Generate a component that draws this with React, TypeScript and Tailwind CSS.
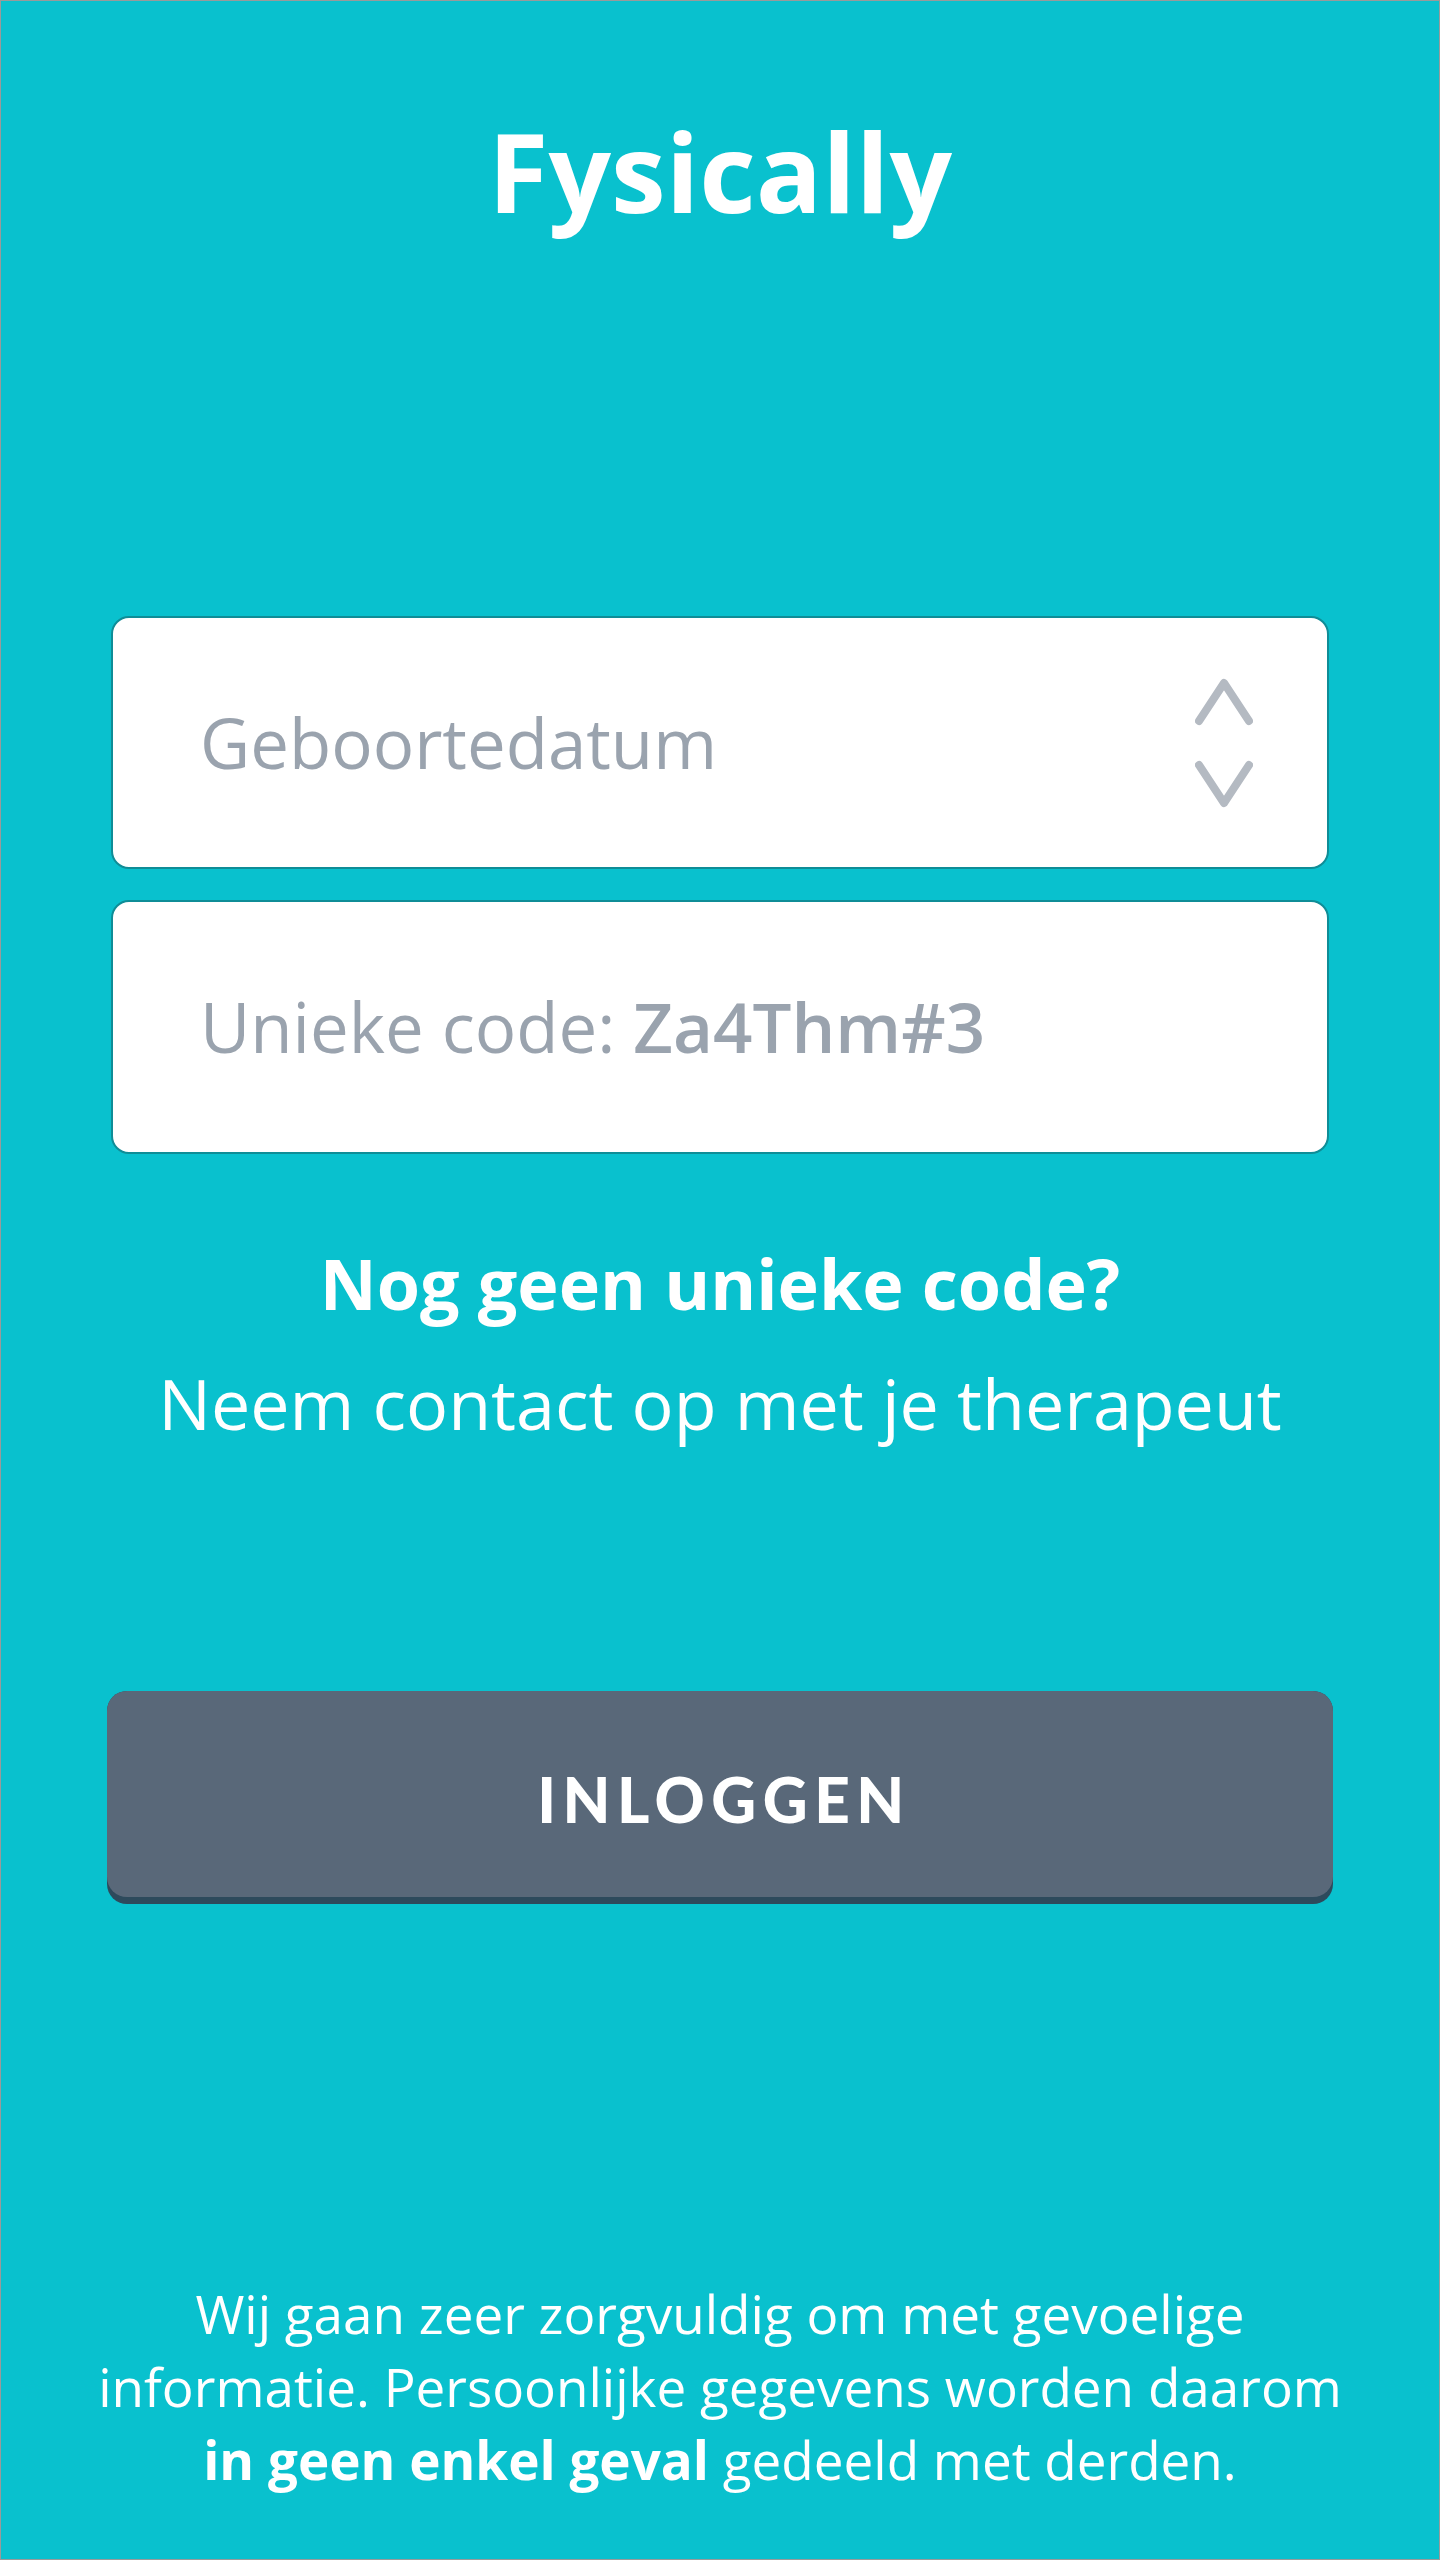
export default function App() {
  return (
    <div className="w-full h-[2560px] bg-[#09c1ce] border border-[#9a9a9a] flex flex-col items-center font-['Open_Sans',sans-serif]">
      {/* Logo */}
      <h1 className="mt-[104px] text-[110px] leading-[130px] font-bold text-white">
        Fysically
      </h1>

      {/* Birth date */}
      <div className="mt-[381px] w-[1218px] h-[253px] bg-white border-2 border-[#0f8d97] rounded-[18px] flex items-center justify-between pl-[87px] pr-[74px]">
        <span className="text-[69px] text-[#9aa3ae]">Geboortedatum</span>
        <svg width="58" height="130" viewBox="0 0 58 130" fill="none" stroke="#b4bac2" strokeWidth="8" strokeLinecap="round" strokeLinejoin="round">
          <path d="M4 43 L29 5 L54 43" />
          <path d="M4 87 L29 125 L54 87" />
        </svg>
      </div>

      {/* Unique code */}
      <div className="mt-[31px] w-[1218px] h-[254px] bg-white border-2 border-[#0f8d97] rounded-[18px] flex items-center pl-[87px]">
        <span className="text-[69px] text-[#9aa3ae]">
          Unieke code: <span className="font-semibold">Za4Thm#3</span>
        </span>
      </div>

      {/* Help text */}
      <div className="mt-[69px] text-center text-white">
        <p className="text-[70px] leading-[120px] font-bold">Nog geen unieke code?</p>
        <p className="text-[70px] leading-[120px]">Neem contact op met je therapeut</p>
      </div>

      {/* Login button */}
      <button className="mt-[228px] w-[1226px] h-[213px] rounded-[20px] bg-[#2d4a5c] pb-[7px]">
        <div className="h-full w-full rounded-[20px] bg-[#596879] flex items-center justify-center pt-[10px] pl-[8px]">
          <span className="font-['Lato',sans-serif] font-black text-[62px] leading-none tracking-[6.5px] text-white">
            INLOGGEN
          </span>
        </div>
      </button>

      {/* Privacy note */}
      <p className="mt-[373px] text-center text-white text-[53px] leading-[73px]">
        Wij gaan zeer zorgvuldig om met gevoelige
        <br />
        informatie. Persoonlijke gegevens worden daarom
        <br />
        <span className="font-bold">in geen enkel geval</span> gedeeld met derden.
      </p>
    </div>
  );
}
